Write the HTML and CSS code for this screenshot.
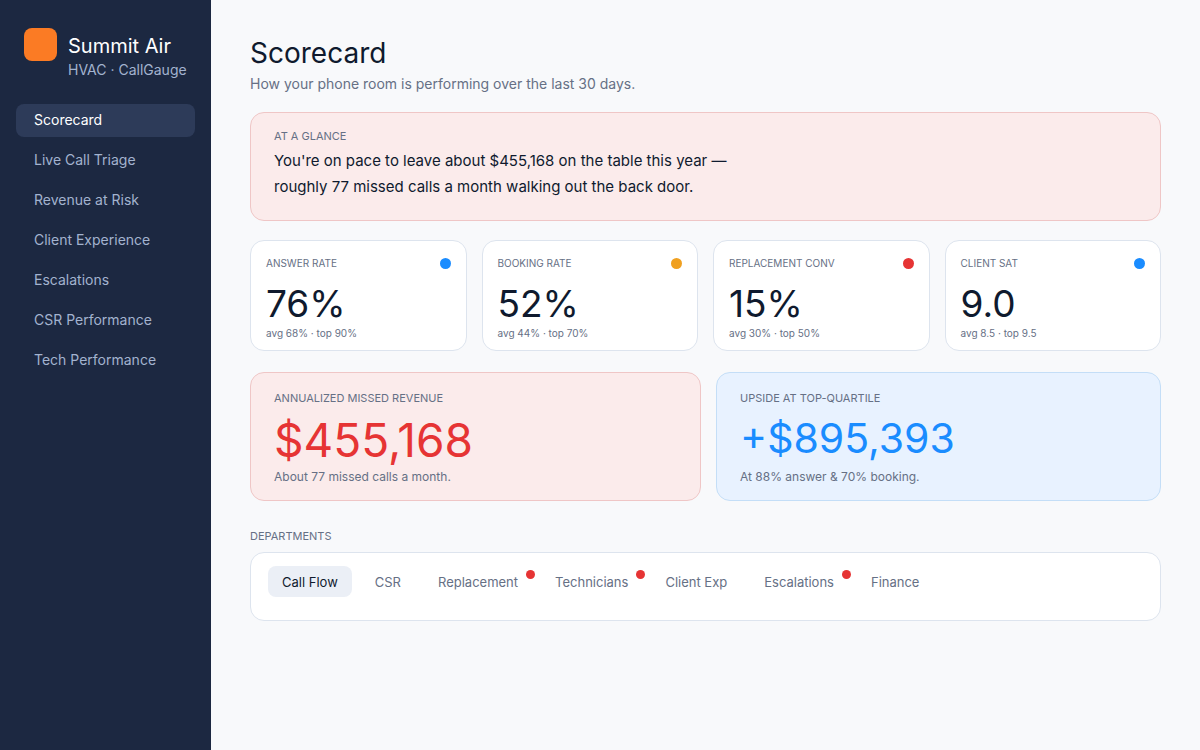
FILE: index.html
```html
<!DOCTYPE html>
<html lang="en">
<head>
    <meta charset="UTF-8">
    <meta name="viewport" content="width=device-width, initial-scale=1.0">
    <title>Scorecard - Summit Air</title>
    <link rel="stylesheet" href="styles.css">
</head>
<body>

<!-- Sidebar -->
<aside class="sidebar">
    <div class="brand">
        <div class="brand-logo"></div>
        <div class="brand-text">
            <div class="brand-name">Summit Air</div>
            <div class="brand-tagline">HVAC · CallGauge</div>
        </div>
    </div>
    <nav class="nav">
        <a href="#" class="nav-link active">Scorecard</a>
        <a href="#" class="nav-link">Live Call Triage</a>
        <a href="#" class="nav-link">Revenue at Risk</a>
        <a href="#" class="nav-link">Client Experience</a>
        <a href="#" class="nav-link">Escalations</a>
        <a href="#" class="nav-link">CSR Performance</a>
        <a href="#" class="nav-link">Tech Performance</a>
    </nav>
</aside>

<main class="content">
    <h1>Scorecard</h1>
    <p class="subtitle">How your phone room is performing over the last 30 days.</p>

    <!-- At a glance -->
    <section class="card glance">
        <h2 class="label">AT A GLANCE</h2>
        <p class="glance-text">You're on pace to leave about $455,168 on the table this year — roughly 77 missed calls a month walking out the back door.</p>
    </section>

    <!-- Stats -->
    <section class="stats">
        <div class="card stat">
            <div class="stat-head">
                <h2 class="stat-label">ANSWER RATE</h2>
                <span class="dot blue"></span>
            </div>
            <div class="stat-value">76%</div>
            <div class="stat-note">avg 68% · top 90%</div>
        </div>
        <div class="card stat">
            <div class="stat-head">
                <h2 class="stat-label">BOOKING RATE</h2>
                <span class="dot orange"></span>
            </div>
            <div class="stat-value">52%</div>
            <div class="stat-note">avg 44% · top 70%</div>
        </div>
        <div class="card stat">
            <div class="stat-head">
                <h2 class="stat-label">REPLACEMENT CONV</h2>
                <span class="dot red"></span>
            </div>
            <div class="stat-value">15%</div>
            <div class="stat-note">avg 30% · top 50%</div>
        </div>
        <div class="card stat">
            <div class="stat-head">
                <h2 class="stat-label">CLIENT SAT</h2>
                <span class="dot blue"></span>
            </div>
            <div class="stat-value">9.0</div>
            <div class="stat-note">avg 8.5 · top 9.5</div>
        </div>
    </section>

    <!-- Revenue -->
    <section class="revenue">
        <div class="card money missed">
            <h2 class="label">ANNUALIZED MISSED REVENUE</h2>
            <div class="money-value">$455,168</div>
            <p class="money-note">About 77 missed calls a month.</p>
        </div>
        <div class="card money upside">
            <h2 class="label">UPSIDE AT TOP-QUARTILE</h2>
            <div class="money-value">+$895,393</div>
            <p class="money-note">At 88% answer &amp; 70% booking.</p>
        </div>
    </section>

    <!-- Departments -->
    <h2 class="label">DEPARTMENTS</h2>
    <div class="card tabs">
        <button type="button" class="tab active">Call Flow</button>
        <button type="button" class="tab">CSR</button>
        <button type="button" class="tab alert">Replacement</button>
        <button type="button" class="tab alert">Technicians</button>
        <button type="button" class="tab">Client Exp</button>
        <button type="button" class="tab alert">Escalations</button>
        <button type="button" class="tab">Finance</button>
    </div>
</main>

</body>
</html>
```
FILE: styles.css
```css
* {
    box-sizing: border-box;
}

body {
    font-family: Inter, "Liberation Sans", sans-serif;
    background-color: #f8f9fb;
    color: #0f1a2e;
    margin: 0;
    min-height: 100vh;
    display: flex;
}

h1, h2, p {
    margin: 0;
    font-weight: 400;
}

/* Sidebar */
.sidebar {
    width: 211px;
    flex-shrink: 0;
    background-color: #1c2841;
    padding: 28px 16px;
}

.brand {
    display: flex;
    gap: 11px;
    padding: 0 8px;
    margin-bottom: 24px;
}

.brand-logo {
    width: 33px;
    height: 33px;
    flex-shrink: 0;
    border-radius: 8px;
    background-color: #fb7b24;
}

.brand-text {
    padding-top: 5px;
    white-space: nowrap;
}

.brand-name {
    font-size: 20px;
    line-height: 27px;
    color: #ffffff;
}

.brand-tagline {
    font-size: 14px;
    line-height: 20px;
    color: #a3b3cf;
}

.nav {
    display: flex;
    flex-direction: column;
    gap: 7px;
}

.nav-link {
    font-size: 14px;
    line-height: 31px;
    padding: 0 18px 2px;
    border-radius: 8px;
    color: #a3b3cf;
    text-decoration: none;
}

.nav-link.active {
    background-color: #2d3b59;
    color: #ffffff;
}

/* Content */
.content {
    flex: 1;
    min-width: 0;
    padding: 34px 39px;
}

h1 {
    font-size: 28px;
    line-height: 38px;
}

.subtitle {
    font-size: 14px;
    line-height: 24px;
    margin-bottom: 16px;
    color: #667085;
}

.card {
    background-color: #ffffff;
    border: 1px solid #dde4ee;
    border-radius: 14px;
}

.label {
    font-size: 11px;
    line-height: 16px;
    color: #667085;
}

.glance,
.missed {
    background-color: #fbebeb;
    border-color: #efc6c6;
}

.glance {
    padding: 15px 23px 20px;
    margin-bottom: 19px;
}

.glance-text {
    font-size: 15px;
    line-height: 26px;
    max-width: 480px;
    margin-top: 4px;
}

/* Stats */
.stats {
    display: grid;
    grid-template-columns: repeat(4, 1fr);
    gap: 15px;
    margin-bottom: 21px;
}

.stat {
    padding: 14px 15px 9px;
}

.stat-head {
    display: flex;
    justify-content: space-between;
    align-items: center;
}

.stat-label,
.stat-note {
    font-size: 10px;
    line-height: 16px;
    color: #667085;
}

.stat-value {
    font-size: 37px;
    line-height: 46px;
    margin: 10px 0 -2px;
}

.dot {
    width: 11px;
    height: 11px;
    border-radius: 50%;
}

.blue {
    background-color: #1a8cff;
}

.orange {
    background-color: #f0a020;
}

.red {
    background-color: #e63434;
}

/* Revenue */
.revenue {
    display: grid;
    grid-template-columns: 451fr 445fr;
    gap: 15px;
    margin-bottom: 27px;
}

.money {
    display: flex;
    flex-direction: column;
    padding: 17px 23px 14px;
}

.money-value {
    margin-top: 7px;
}

.money-note {
    font-size: 12px;
    line-height: 18px;
    margin-top: auto;
    color: #667085;
}

.missed .money-value {
    font-size: 46px;
    line-height: 55px;
    color: #e63434;
}

.upside {
    background-color: #e8f2ff;
    border-color: #c4def7;
}

.upside .money-value {
    font-size: 41px;
    line-height: 50px;
    color: #1a8cff;
}

/* Departments */
.tabs {
    display: flex;
    flex-wrap: wrap;
    gap: 9px;
    margin-top: 8px;
    padding: 13px 17px 23px;
}

.tab {
    position: relative;
    font-family: inherit;
    font-size: 13px;
    line-height: 30px;
    padding: 1px 14px 0;
    border: none;
    border-radius: 8px;
    background: none;
    color: #667085;
    cursor: pointer;
}

.tab.active {
    background-color: #ebeff6;
    color: #0f1a2e;
}

.tab.alert::after {
    content: '';
    position: absolute;
    top: 4px;
    right: -3px;
    width: 9px;
    height: 9px;
    border-radius: 50%;
    background-color: #e63434;
}
```
